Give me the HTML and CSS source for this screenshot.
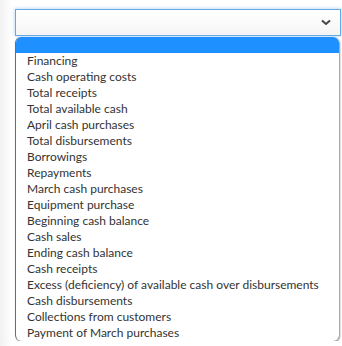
FILE: index.html
```html
<!DOCTYPE html>
<html lang="en">
<head>
    <meta charset="UTF-8">
    <meta name="viewport" content="width=device-width, initial-scale=1.0">
    <title>Select dropdown</title>
    <link rel="stylesheet" href="styles.css">
</head>
<body>
    <div class="field">
        <div class="select">
            <svg class="chevron" width="10" height="7" viewBox="0 0 10 7">
                <path d="M1 1.5 L5 5 L9 1.5" fill="none" stroke="#444" stroke-width="2"/>
            </svg>
        </div>
        <ul class="options">
            <li class="selected">&nbsp;</li>
            <li>Financing</li>
            <li>Cash operating costs</li>
            <li>Total receipts</li>
            <li>Total available cash</li>
            <li>April cash purchases</li>
            <li>Total disbursements</li>
            <li>Borrowings</li>
            <li>Repayments</li>
            <li>March cash purchases</li>
            <li>Equipment purchase</li>
            <li>Beginning cash balance</li>
            <li>Cash sales</li>
            <li>Ending cash balance</li>
            <li>Cash receipts</li>
            <li>Excess (deficiency) of available cash over disbursements</li>
            <li>Cash disbursements</li>
            <li>Collections from customers</li>
            <li>Payment of March purchases</li>
        </ul>
    </div>
</body>
</html>
```

FILE: styles.css
```css
body {
    margin: 0;
    padding: 9px 1px 0 15px;
    background: linear-gradient(to right, #f1f1f1, #fff 12px);
    font-family: Lato, "Open Sans", sans-serif;
}
.field {
    width: 326px;
}
.select {
    height: 25px;
    border: 1px solid #66a8e6;
    box-shadow: 0 0 4px rgba(102, 168, 230, 0.55);
    background: linear-gradient(#fff, #f5f5f5);
    display: flex;
    align-items: center;
    justify-content: flex-end;
    padding-right: 9px;
}
.chevron {
    display: block;
}
.options {
    list-style: none;
    margin: 1px 0 0;
    padding: 0;
    width: 323px;
    background: #fff;
    border-left: 1px solid #6d6d6d;
    border-radius: 6px;
    box-shadow: 1px 1px 2px rgba(0, 0, 0, 0.45);
    overflow: hidden;
}
.options li {
    height: 16px;
    line-height: 16px;
    font-size: 12px;
    color: #333;
    padding-left: 11px;
    white-space: nowrap;
}
.options li.selected {
    background: #1e90ff;
}
```
